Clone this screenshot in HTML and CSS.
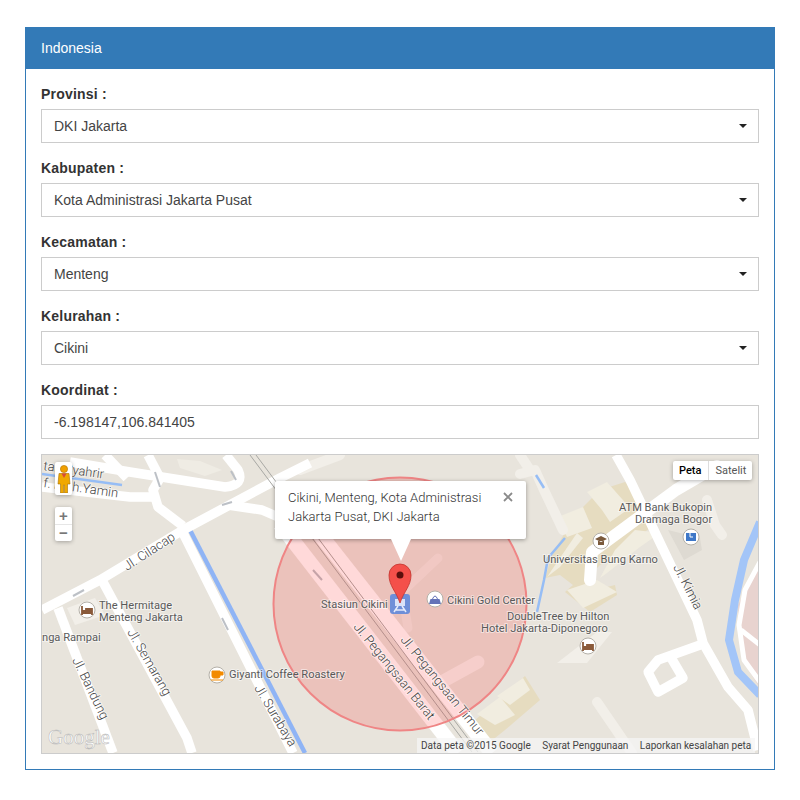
FILE: index.html
```html
<!DOCTYPE html>
<html lang="id">
<head>
<meta charset="utf-8">
<title>Indonesia</title>
<link rel="stylesheet" href="styles.css">
</head>
<body>
<section class="panel">
  <header class="panel-heading">Indonesia</header>
  <form class="panel-body">
    <div class="form-group">
      <label class="label">Provinsi :</label>
      <div class="select-wrap"><select class="control"><option>DKI Jakarta</option></select></div>
    </div>
    <div class="form-group">
      <label class="label">Kabupaten :</label>
      <div class="select-wrap"><select class="control"><option>Kota Administrasi Jakarta Pusat</option></select></div>
    </div>
    <div class="form-group">
      <label class="label">Kecamatan :</label>
      <div class="select-wrap"><select class="control"><option>Menteng</option></select></div>
    </div>
    <div class="form-group">
      <label class="label">Kelurahan :</label>
      <div class="select-wrap"><select class="control"><option>Cikini</option></select></div>
    </div>
    <div class="form-group">
      <label class="label">Koordinat :</label>
      <input class="control" type="text" value="-6.198147,106.841405">
    </div>
    <div class="map">
      <svg class="map-canvas" viewBox="42 455 716 298" width="716" height="298" xmlns="http://www.w3.org/2000/svg">
        <rect x="42" y="455" width="716" height="298" fill="#e8e4dc"/>
        <!-- building areas -->
        <path class="area" d="M177 459 L200 461 L222 470 L205 476 L180 468Z"/>
        <path class="area-light" d="M67 608 L95 598 L105 615 L75 625Z"/>
        <path class="campus" d="M575 515 L600 490 L625 482 L640 495 L655 525 L625 545 L600 565 L585 580 L595 590 L615 585 L617 595 L590 612 L565 592 L573 585 L560 575 L545 578 L552 555Z"/>
        <path class="campus-b" d="M558 517 L583 507 L592 528 L567 537Z"/>
        <path class="campus-b" d="M587 492 L607 482 L630 508 L610 522 L602 510Z"/>
        <path class="campus-b" d="M547 577 L577 533 L583 538 L560 567Z"/>
        <path class="campus-b" d="M635 530 L660 533 L640 547 L607 573 L600 578 L615 550Z"/>
        <path class="campus-b" d="M567 590 L597 580 L617 592 L583 608Z"/>
        <path class="grey-lot" d="M668 530 L700 538 L702 550 L684 560 Z"/>
        <path class="area-light" d="M597 632 L612 632 L587 663 L557 663Z"/>
        <path class="campus" d="M473 722 L525 676 L540 700 L505 730 L490 742Z"/>
        <path class="campus-b" d="M477 714 L500 697 L515 715 L495 725Z"/>
        <path class="campus-b" d="M497 696 L523 678 L530 690 L510 705Z"/>
        <path class="pink-area" d="M738 605 L758 565 L758 685 L742 660Z"/>
        <!-- light roads -->
        <g class="road-light">
          <path d="M520 474 L535 470 L544 490 L563 530"/>
          <path d="M520 455 L530 470"/>
          <path d="M707 500 L715 525 L722 535"/>
          <path d="M597 702 L632 753"/>
          <path d="M300 470 L340 455"/>
        </g>
        <!-- water -->
        <g class="water-thin">
          <path d="M536 475 L544 488" />
          <path d="M565 538 L548 558 L544 580 L537 612"/>
          <path d="M42 474 L122 485"/>
        </g>
        <path class="canal" d="M190 530 L305 753"/>
        <path class="river" d="M760 522 L744 560 L735 600 L729 640 L738 672 L760 695"/>
        <!-- roads -->
        <g class="road">
          <path d="M42 487 L130 497 L152 497"/>
          <path d="M70 462 L130 472 L225 487 Q245 485 238 470 L226 455"/>
          <path d="M42 610 L100 580 L183 530 L280 478 L310 463"/>
          <path d="M105 455 L127 478"/>
          <path d="M148 455 L160 478 L153 490 L158 507 L183 526"/>
          <path d="M228 505 L262 510 L285 520"/>
          <path d="M183 533 L293 753"/>
          <path d="M58 608 L113 753"/>
          <path d="M103 582 L187 738 L192 753"/>
          <path d="M616 455 L630 480 L697 620 L703 643 L728 687 L748 710 L758 750"/>
          <path d="M700 645 L658 660 L648 672 L658 692 L683 678 L670 656"/>
          <path d="M717 466 L676 490 L592 552 L590 580" class="road-wide"/>
          <path class="road-thin" d="M760 562 L745 590 L739 625 L744 660 L760 682"/>
          <path class="road-thin" d="M741 630 L760 645"/>
        </g>
        <g class="road-big">
          <path d="M280 524 L458 753"/>
          <path d="M318 532 L492 753"/>
        </g>
        <path class="road-stub-line" d="M438 684 L478 662"/>
        <path class="road-faint" d="M408 628 L402 592 L438 558"/>
        <g class="rail">
          <path d="M250 455 L472 752"/>
          <path d="M256 455 L478 752"/>
        </g>
        <path d="M313 570 L322 580" class="arrow"/>
        <path d="M155 472 L160 487" class="arrow"/>
        <path d="M231 471 L236 480" class="arrow"/>
        <path d="M222 505 L232 502" class="arrow"/>
        <path d="M73 596 L84 590" class="arrow"/>
        <path d="M222 618 L228 630" class="arrow"/>
        <circle class="geofence" cx="400" cy="604" r="126.500"/>
        <!-- labels -->
        <g class="lbl">
          <text x="99" y="609">The Hermitage</text>
          <text x="99" y="621">Menteng Jakarta</text>
          <text x="42" y="641">nga Rampai</text>
          <text x="229" y="678">Giyanti Coffee Roastery</text>
          <text x="321" y="608">Stasiun Cikini</text>
          <text x="447" y="604">Cikini Gold Center</text>
          <text x="507" y="620">DoubleTree by Hilton</text>
          <text x="481" y="632">Hotel Jakarta-Diponegoro</text>
          <text x="619" y="511">ATM Bank Bukopin</text>
          <text x="635" y="523">Dramaga Bogor</text>
          <text x="543" y="563">Universitas Bung Karno</text>
        </g>
        <g class="lbl lbl-road">
          <text transform="translate(43,470) rotate(8)">tan Syahrir</text>
          <text transform="translate(43,487) rotate(8)">f. Moh.Yamin</text>
          <text transform="translate(127,571) rotate(-33)">Jl. Cilacap</text>
          <text transform="translate(72,660) rotate(64)">Jl. Bandung</text>
          <text transform="translate(127,632) rotate(60)">Jl. Semarang</text>
          <text transform="translate(254,688) rotate(59)">Jl. Surabaya</text>
          <text transform="translate(673,567) rotate(63)">Jl. Kimia</text>
          <text transform="translate(353,627) rotate(51)">Jl. Pegangsaan Barat</text>
          <text transform="translate(400,640) rotate(51)">Jl. Pegangsaan Timur</text>
        </g>
        <!-- POI -->
        <g class="poi"><circle cx="87" cy="610" r="8"/><path class="poi-bed" d="M82 606 V615 M82 613 H92 V615 M82 611 H92 V609 H86 V611"/></g>
        <g class="poi"><circle cx="217" cy="675" r="8"/><path d="M212 671 H220 V676 Q220 678 218 678 H214 Q212 678 212 676Z M220 672 H223 V675 H220 M211 680 H223" fill="#f28a00" stroke="#f28a00" stroke-width="1"/></g>
        <g class="poi"><circle cx="435" cy="599" r="8"/><path d="M430.500 599 H439.500 L441 604 H429Z" fill="#6473b8"/><path d="M432.500 599 Q435 593 437.500 599" fill="none" stroke="#6473b8"/></g>
        <g class="poi"><circle cx="601" cy="541" r="8"/><path d="M595 539 L601 536 L607 539 L601 542Z M598 541 V545 H604 V541" fill="#7a5a3c"/></g>
        <g class="poi"><circle cx="691" cy="537" r="8"/><path d="M686 533 H696 V541 H686Z" fill="#3f78c8"/><path d="M690 533 V537 H693" stroke="#fff" fill="none"/></g>
        <g class="poi"><circle cx="588" cy="646" r="8"/><path class="poi-bed" d="M583 642 V651 M583 649 H593 V651 M583 647 H593 V645 H587 V647"/></g>
        <!-- station and marker -->
        <rect x="390" y="594" width="20" height="20" rx="3" fill="#6f8fd8"/>
        <path d="M395 599 H405 V606 H395Z" fill="#d9e2f8"/>
        <path d="M394 612 L398 606 M406 612 L402 606 M396 610 H404" stroke="#e6ecfb" stroke-width="1.500" fill="none"/>
        <path d="M400 603 C396 591 389 586 389 575 A11 11 0 0 1 411 575 C411 586 404 591 400 603Z" fill="#f4504a" stroke="#c2322c" stroke-width=".8"/>
        <circle cx="400" cy="575" r="3.500" fill="#5a0f0c"/>
        <text class="logo" x="48" y="744">Google</text>
      </svg>

      <div class="pegman">
        <svg viewBox="0 0 14 28" width="14" height="28" xmlns="http://www.w3.org/2000/svg">
          <circle cx="7" cy="4" r="3.600" fill="#f0a000" stroke="#b07000" stroke-width=".6"/>
          <path d="M2 8.500 H12 L13 19 H10.500 V28 H7.500 V20 H6.500 V28 H3.500 V19 H1 Z" fill="#f0a800" stroke="#a87000" stroke-width=".6"/>
          <path d="M4.500 8.500 H9.500 L7 13Z" fill="#d84a3a"/>
        </svg>
      </div>

      <div class="zoom">
        <button class="zoom-btn" type="button">+</button>
        <button class="zoom-btn" type="button">−</button>
      </div>

      <div class="type">
        <span class="type-btn type-on">Peta</span>
        <span class="type-btn">Satelit</span>
      </div>

      <div class="info">
        <p class="info-text">Cikini, Menteng, Kota Administrasi Jakarta Pusat, DKI Jakarta</p>
        <svg class="info-close" viewBox="0 0 10 10" width="10" height="10" xmlns="http://www.w3.org/2000/svg"><path d="M1 1 L9 9 M9 1 L1 9" stroke="#8a8a8a" stroke-width="1.800"/></svg>
        <span class="info-tail"></span>
      </div>

      <div class="attribution">
        <span>Data peta ©2015 Google</span>
        <span>Syarat Penggunaan</span>
        <span>Laporkan kesalahan peta</span>
      </div>
    </div>
  </form>
</section>
</body>
</html>
```
FILE: styles.css
```css
* { box-sizing: border-box; }
html, body { margin: 0; background: #fff; }
body {
  padding: 27px 25px 0;
  font: 14px/20px "Liberation Sans", Arial, sans-serif;
  color: #333;
}
.panel { border: 1px solid #337ab7; background: #fff; }
.panel-heading {
  padding: 10px 15px 11px;
  background: #337ab7;
  color: #fff;
}
.panel-body { padding: 15px; display: flex; flex-direction: column; }
.form-group { margin-bottom: 15px; }
.label { display: block; margin-bottom: 5px; font-weight: 700; letter-spacing: .2px; }
.select-wrap { position: relative; }
.select-wrap::after {
  content: "";
  position: absolute;
  right: 12px;
  top: 15px;
  border-style: solid;
  border-width: 4px 4.500px 0;
  border-color: #222 transparent transparent;
}
.control {
  display: block;
  width: 100%;
  height: 34px;
  padding: 6px 12px;
  border: 1px solid #ccc;
  border-radius: 0;
  background: #fff;
  color: #444;
  font: inherit;
  appearance: none;
  outline: 0;
}
.map {
  position: relative;
  height: 300px;
  border: 1px solid #ccc;
  overflow: hidden;
}
.map-canvas { display: block; }
.area { fill: #efece4; }
.area-light { fill: #f2efe9; }
.campus { fill: #e6dcc0; }
.campus-b { fill: #f1ede0; }
.grey-lot { fill: #dedad2; }
.pink-area { fill: #e8d3cf; }
.road-light path { fill: none; stroke: #f2efe9; stroke-width: 10; stroke-linecap: round; stroke-linejoin: round; }
.water-thin path { fill: none; stroke: #96bdf5; stroke-width: 2.500; }
.canal { fill: none; stroke: #8fb4f5; stroke-width: 4.500; }
.river { fill: none; stroke: #a3c5f8; stroke-width: 8; }
.road path { fill: none; stroke: #fff; stroke-width: 9.500; stroke-linejoin: round; }
.road .road-wide { stroke-width: 12; stroke-linecap: round; }
.road .road-thin { stroke-width: 5; }
.road-big path { fill: none; stroke: #fff; stroke-width: 15; }
.road-stub-line { fill: none; stroke: #fff; stroke-width: 13; stroke-linecap: round; opacity: .55; }
.road-faint { fill: none; stroke: #fff; stroke-width: 9; stroke-linecap: round; opacity: .3; }
.rail path { fill: none; stroke: #a8a8a4; stroke-width: 1; }
.arrow { fill: none; stroke: #bcc0c6; stroke-width: 2; }
.geofence { fill: rgba(255, 0, 0, .15); stroke: #ef8585; stroke-width: 2; }
.lbl text {
  font: 11.100px Roboto, sans-serif;
  fill: #5a5a5a;
  stroke: rgba(255, 255, 255, .5);
  stroke-width: 2px;
  paint-order: stroke;
}
.lbl-road text { font-size: 13px; font-weight: 300; fill: #444; }
.poi circle { fill: #fff; stroke: #b4b0a8; stroke-width: 1; }
.poi-bed { fill: none; stroke: #8a5a3a; stroke-width: 1.800; }
.logo {
  font: 21px "Liberation Serif", serif;
  fill: #fff;
  stroke: #b5b5b5;
  stroke-width: .5px;
}
.pegman, .zoom, .type, .info, .attribution { position: absolute; }
.pegman {
  left: 13px;
  top: 7px;
  width: 17px;
  height: 33px;
  padding-top: 3px;
  display: flex;
  justify-content: center;
  background: #fff;
  border-radius: 2px;
  box-shadow: 0 1px 4px rgba(0, 0, 0, .3);
}
.zoom {
  left: 13px;
  top: 52px;
  width: 17px;
  display: flex;
  flex-direction: column;
  background: #fff;
  border-radius: 2px;
  box-shadow: 0 1px 4px rgba(0, 0, 0, .3);
}
.zoom-btn {
  height: 17px;
  padding: 0;
  border: 0;
  background: none;
  color: #777;
  font: 700 15px/16px "Liberation Sans", sans-serif;
}
.zoom-btn + .zoom-btn { border-top: 1px solid #e6e6e6; }
.type {
  left: 631px;
  top: 6px;
  display: flex;
  background: #fff;
  border-radius: 2px;
  box-shadow: 0 1px 4px rgba(0, 0, 0, .3);
  font: 11px/19px Roboto, sans-serif;
  color: #565656;
}
.type-btn { padding: 0 6px; }
.type-on { color: #000; font-weight: 500; padding: 0 7px 0 6px; }
.type-btn + .type-btn { border-left: 1px solid #ddd; }
.info {
  left: 233px;
  top: 26px;
  width: 251px;
  height: 58px;
  padding: 7px 13px;
  background: #fff;
  border-radius: 2px;
  box-shadow: 0 1px 4px rgba(0, 0, 0, .35);
}
.info-text {
  margin: 0;
  width: 205px;
  font: 300 13px/19px Roboto, sans-serif;
  color: #333;
}
.info-close { position: absolute; right: 13px; top: 11px; }
.info-tail {
  position: absolute;
  left: 116px;
  top: 58px;
  border-style: solid;
  border-width: 22px 10px 0;
  border-color: #fff transparent transparent;
}
.attribution {
  right: 3px;
  bottom: 0;
  width: 338px;
  height: 15px;
  padding-left: 4px;
  display: flex;
  gap: 11.500px;
  background: rgba(245, 245, 245, .75);
  font: 10px/15px Roboto, sans-serif;
  color: #444;
}
```
